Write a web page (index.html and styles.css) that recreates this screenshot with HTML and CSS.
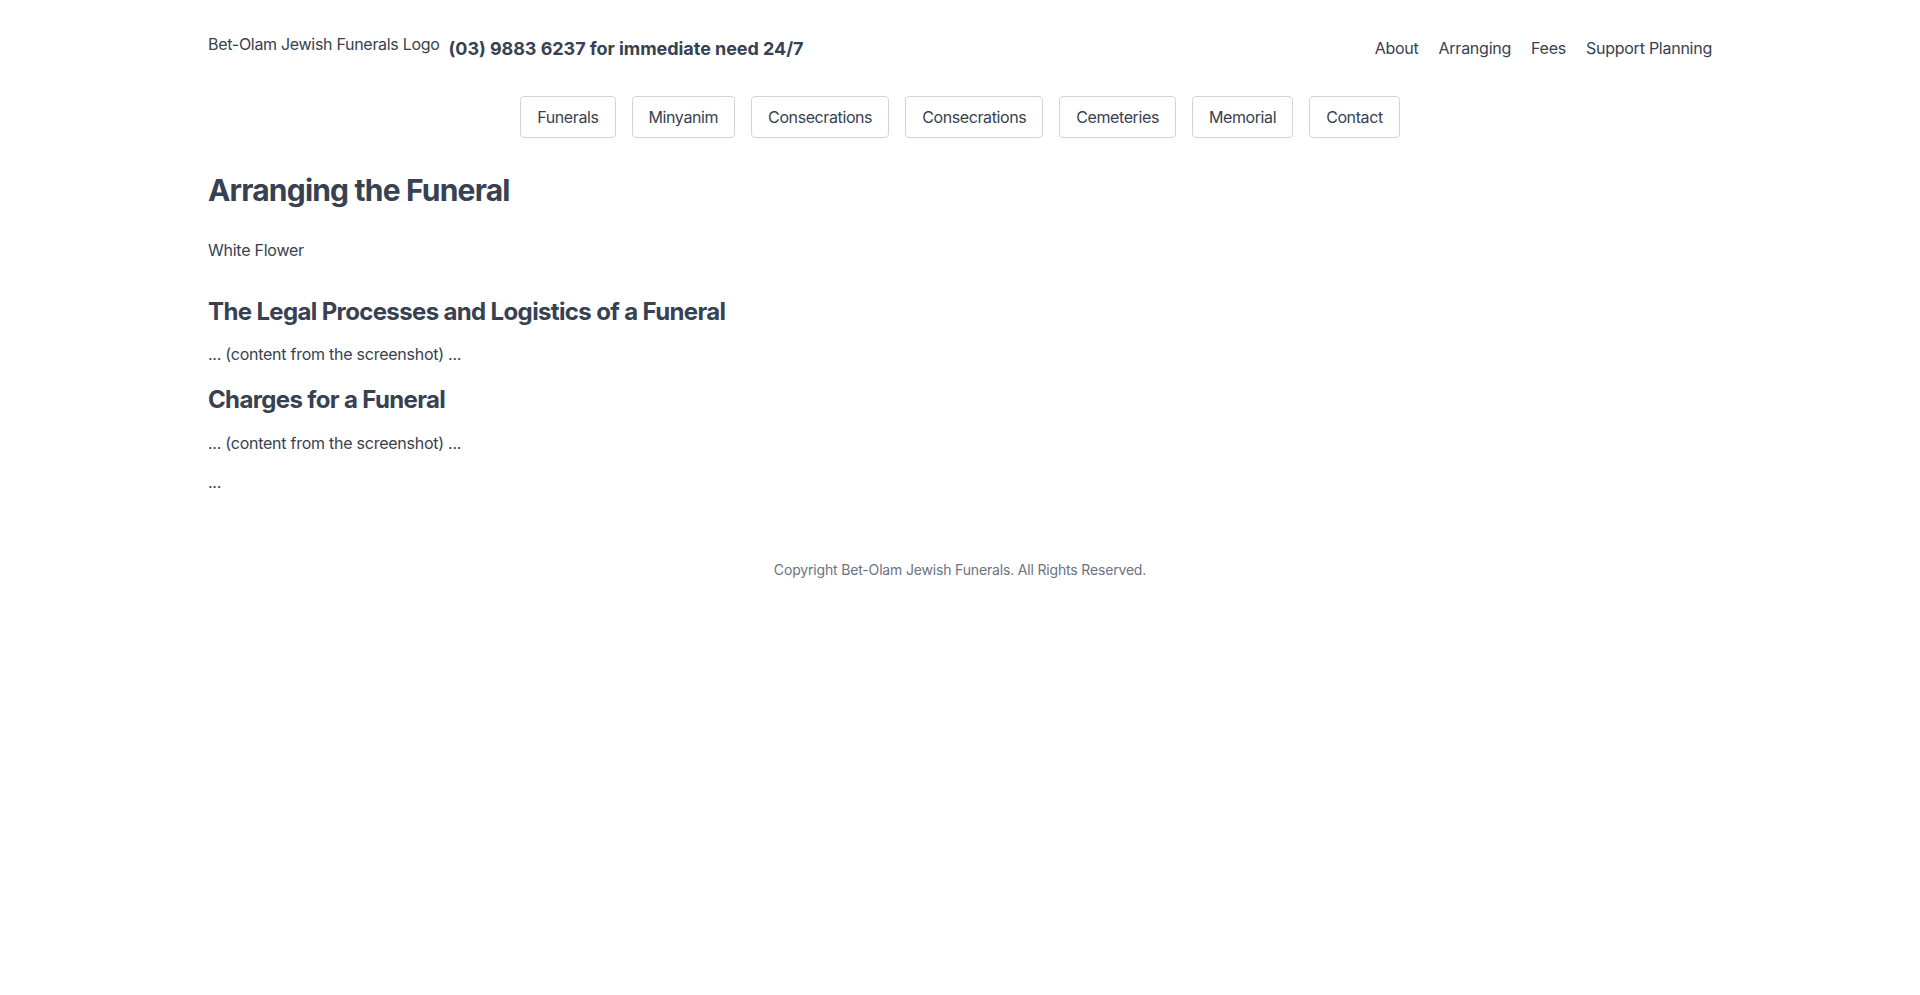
FILE: index.html
```html
<!DOCTYPE html>
<html lang="en">
<head>
<meta charset="utf-8">
<title>Arranging the Funeral - Bet-Olam Jewish Funerals</title>
<link rel="stylesheet" href="styles.css">
</head>
<body>
<div class="container">
  <header class="site-header">
    <div class="brand">
      <span class="logo">Bet-Olam Jewish Funerals Logo</span>
      <span class="phone">(03) 9883 6237 for immediate need 24/7</span>
    </div>
    <nav class="top-links">
      <a href="#">About</a>
      <a href="#">Arranging</a>
      <a href="#">Fees</a>
      <a href="#">Support Planning</a>
    </nav>
  </header>

  <nav class="main-nav">
    <a class="nav-btn" href="#">Funerals</a>
    <a class="nav-btn" href="#">Minyanim</a>
    <a class="nav-btn" href="#">Consecrations</a>
    <a class="nav-btn" href="#">Consecrations</a>
    <a class="nav-btn" href="#">Cemeteries</a>
    <a class="nav-btn" href="#">Memorial</a>
    <a class="nav-btn" href="#">Contact</a>
  </nav>

  <main class="content">
    <h1 class="page-title">Arranging the Funeral</h1>
    <p class="flower">White Flower</p>
    <h2 class="section-title first">The Legal Processes and Logistics of a Funeral</h2>
    <p class="text first-text">... (content from the screenshot) ...</p>
    <h2 class="section-title second">Charges for a Funeral</h2>
    <p class="text">... (content from the screenshot) ...</p>
    <p class="text">...</p>
  </main>

  <footer class="site-footer">
    Copyright Bet-Olam Jewish Funerals. All Rights Reserved.
  </footer>
</div>
</body>
</html>
```

FILE: styles.css
```css
* {
  box-sizing: border-box;
}

html, body {
  margin: 0;
  padding: 0;
  background: #ffffff;
}

body {
  font-family: Inter, "Liberation Sans", sans-serif;
  color: #374151;
  font-size: 16px;
  line-height: 24px;
  letter-spacing: -0.25px;
}

a {
  color: inherit;
  text-decoration: none;
}

.container {
  max-width: 1536px;
  margin: 0 auto;
  padding: 0 16px;
}

.site-header {
  display: flex;
  justify-content: space-between;
  align-items: flex-start;
  padding-top: 32px;
}

.brand {
  display: flex;
  align-items: flex-start;
  gap: 9px;
}

.logo {
  font-size: 16px;
  line-height: 24px;
  letter-spacing: -0.3px;
}

.phone {
  margin-top: 3px;
  font-size: 18px;
  line-height: 28px;
  font-weight: 700;
  letter-spacing: -0.05px;
}

.top-links {
  display: flex;
  gap: 20px;
  margin-top: 4px;
}

.main-nav {
  display: flex;
  justify-content: center;
  gap: 16px;
  margin-top: 33px;
}

.nav-btn {
  display: block;
  padding: 8px 16px;
  border: 1px solid #d1d5db;
  border-radius: 4px;
  line-height: 24px;
  letter-spacing: -0.4px;
}

.content {
  padding-top: 34px;
}

.page-title {
  margin: 0;
  font-size: 30px;
  line-height: 36px;
  font-weight: 700;
  letter-spacing: -0.8px;
}

.flower {
  margin: 30px 0 0;
}

.section-title {
  margin: 16px 0 0;
  font-size: 24px;
  line-height: 32px;
  font-weight: 700;
  letter-spacing: -0.64px;
}

.section-title.first {
  margin-top: 34px;
}

.section-title.second {
  margin-top: 18px;
}

.text {
  margin: 15px 0 0;
}

.text.first-text {
  margin-top: 14px;
}

.site-footer {
  margin-top: 66px;
  text-align: center;
  font-size: 14px;
  line-height: 20px;
  color: #6b7280;
  letter-spacing: -0.17px;
}
```
